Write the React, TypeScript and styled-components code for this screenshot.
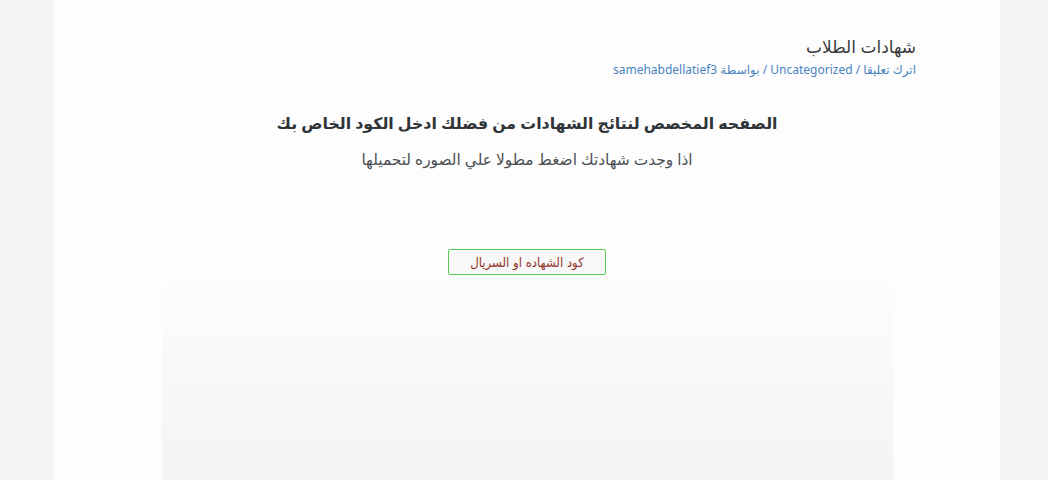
import React from 'react';
import styled, { createGlobalStyle } from 'styled-components';

const GlobalStyle = createGlobalStyle`
  html, body {
    margin: 0;
    padding: 0;
    background: #f5f5f5;
  }
  body {
    font-family: 'Noto Sans', 'DejaVu Sans', sans-serif;
  }
`;

const Page = styled.div`
  height: 480px;
  overflow: hidden;
`;

const Card = styled.article`
  direction: rtl;
  margin-left: 54px;
  width: 946px;
  min-height: 480px;
  box-sizing: border-box;
  background: #fdfdfd;
  padding: 35px 84px 0 84px;
`;

const Header = styled.header`
  text-align: right;
`;

const EntryTitle = styled.h1`
  margin: 0;
  font-size: 17px;
  font-weight: 400;
  line-height: 24px;
  color: #3a3a3a;
`;

const Meta = styled.div`
  margin-top: 2px;
  font-size: 12px;
  line-height: 18px;
  color: #4a83c0;
`;

const Content = styled.div`
  margin-top: 31px;
  text-align: center;
`;

const Lead = styled.h3`
  margin: 0;
  font-size: 15.8px;
  font-weight: 700;
  line-height: 26px;
  color: #2f3438;
`;

const Sub = styled.p`
  margin: 12px 0 0;
  font-size: 15.4px;
  line-height: 24px;
  color: #4b4f54;
`;

const Form = styled.div`
  margin-top: 77px;
  display: flex;
  flex-direction: column;
  align-items: center;
`;

const CodeInput = styled.input`
  position: relative;
  z-index: 1;
  width: 158px;
  height: 26px;
  box-sizing: border-box;
  border: 1px solid #55cc55;
  border-radius: 2px;
  background: #f8f8f8;
  text-align: center;
  font-family: 'DejaVu Sans Condensed', 'DejaVu Sans', sans-serif;
  font-size: 13px;
  color: #96352c;
  outline: none;
  direction: rtl;
  &::placeholder {
    color: #96352c;
    opacity: 1;
  }
`;

const Result = styled.div`
  margin-top: -6px;
  width: 731px;
  height: 220px;
  background: linear-gradient(to bottom, #fdfdfd 0%, #f3f3f3 100%);
`;

export default function App() {
  return (
    <Page>
      <GlobalStyle />
      <Card>
        <Header>
          <EntryTitle>شهادات الطلاب</EntryTitle>
          <Meta>اترك تعليقا / Uncategorized / بواسطة samehabdellatief3</Meta>
        </Header>
        <Content>
          <Lead>الصفحه المخصص لنتائج الشهادات من فضلك ادخل الكود الخاص بك</Lead>
          <Sub>اذا وجدت شهادتك اضغط مطولا علي الصوره لتحميلها</Sub>
          <Form>
            <CodeInput placeholder="كود الشهاده او السريال" />
            <Result />
          </Form>
        </Content>
      </Card>
    </Page>
  );
}
